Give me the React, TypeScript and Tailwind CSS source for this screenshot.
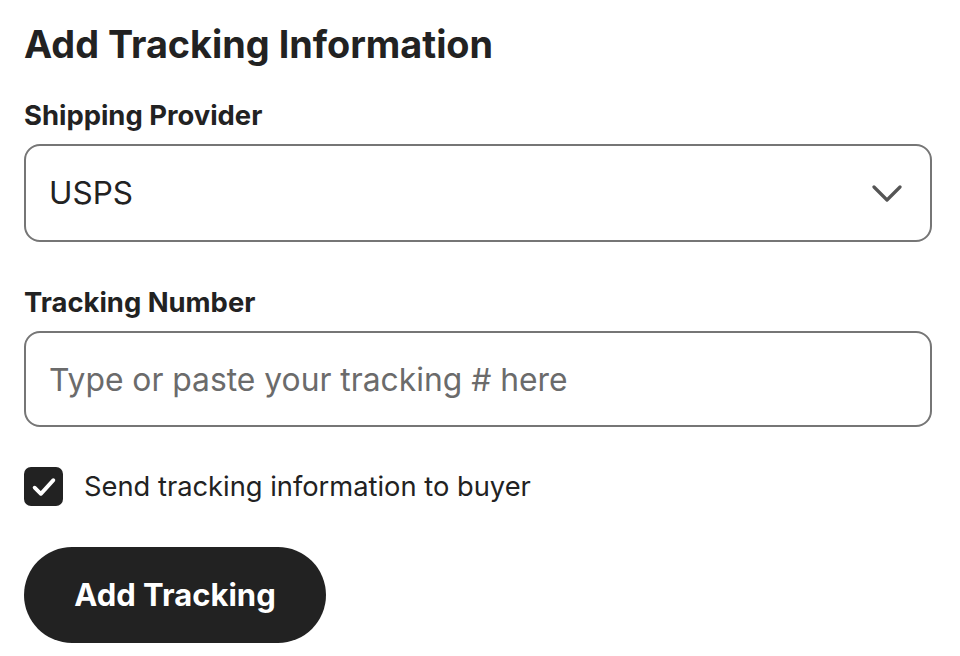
import { useState } from "react";

export default function App() {
  const [sendToBuyer, setSendToBuyer] = useState(true);
  const [provider, setProvider] = useState("USPS");
  const [tracking, setTracking] = useState("");

  return (
    <div
      className="min-h-screen bg-white px-6 pt-[22px] text-[#222222]"
      style={{ fontFamily: "Inter, 'Noto Sans', sans-serif" }}
    >
      <h1 className="text-[37.8px] font-bold leading-[44px]">
        Add Tracking Information
      </h1>

      {/* Shipping provider */}
      <label className="mt-[33px] block text-[27.4px] font-bold leading-[32px]">
        Shipping Provider
      </label>
      <div className="relative mt-[13px] w-[908px]">
        <select
          value={provider}
          onChange={(e) => setProvider(e.target.value)}
          className="h-[98px] w-full appearance-none rounded-[16px] border-2 border-[#767676] bg-white pl-[23px] text-[31.5px] text-[#222222] outline-none"
        >
          <option>USPS</option>
          <option>UPS</option>
          <option>FedEx</option>
          <option>DHL</option>
        </select>
        <svg
          className="pointer-events-none absolute right-[30px] top-[39px] h-[20px] w-[30px]"
          viewBox="0 0 30 20"
          fill="none"
          stroke="#555555"
          strokeWidth={3.2}
          strokeLinecap="round"
          strokeLinejoin="round"
        >
          <path d="M2 4l13 13L28 4" />
        </svg>
      </div>

      {/* Tracking number */}
      <label className="mt-[44px] block text-[27.4px] font-bold leading-[32px]">
        Tracking Number
      </label>
      <input
        value={tracking}
        onChange={(e) => setTracking(e.target.value)}
        placeholder="Type or paste your tracking # here"
        className="mt-[13px] h-[96px] w-[908px] rounded-[16px] border-2 border-[#767676] bg-white pl-[23px] text-[31.8px] text-[#222222] outline-none placeholder:text-[#6b6b6b]"
      />

      {/* Checkbox */}
      <label className="mt-[40px] flex cursor-pointer items-center gap-[21px]">
        <button
          type="button"
          onClick={() => setSendToBuyer((v) => !v)}
          className={`flex h-[39px] w-[39px] items-center justify-center rounded-[7px] ${
            sendToBuyer ? "bg-[#222222]" : "border-2 border-[#767676] bg-white"
          }`}
        >
          {sendToBuyer && (
            <svg className="h-[30px] w-[30px]" viewBox="0 0 24 24" fill="none" stroke="white" strokeWidth={3} strokeLinecap="round" strokeLinejoin="round">
              <path d="M4.5 12.5l5 5L19.5 6.5" />
            </svg>
          )}
        </button>
        <span className="text-[27.3px] leading-[32px]">Send tracking information to buyer</span>
      </label>

      {/* Submit */}
      <button className="mt-[41px] flex h-[96px] w-[302px] items-center justify-center rounded-full bg-[#222222] text-[31px] font-bold text-white">
        Add Tracking
      </button>
    </div>
  );
}
